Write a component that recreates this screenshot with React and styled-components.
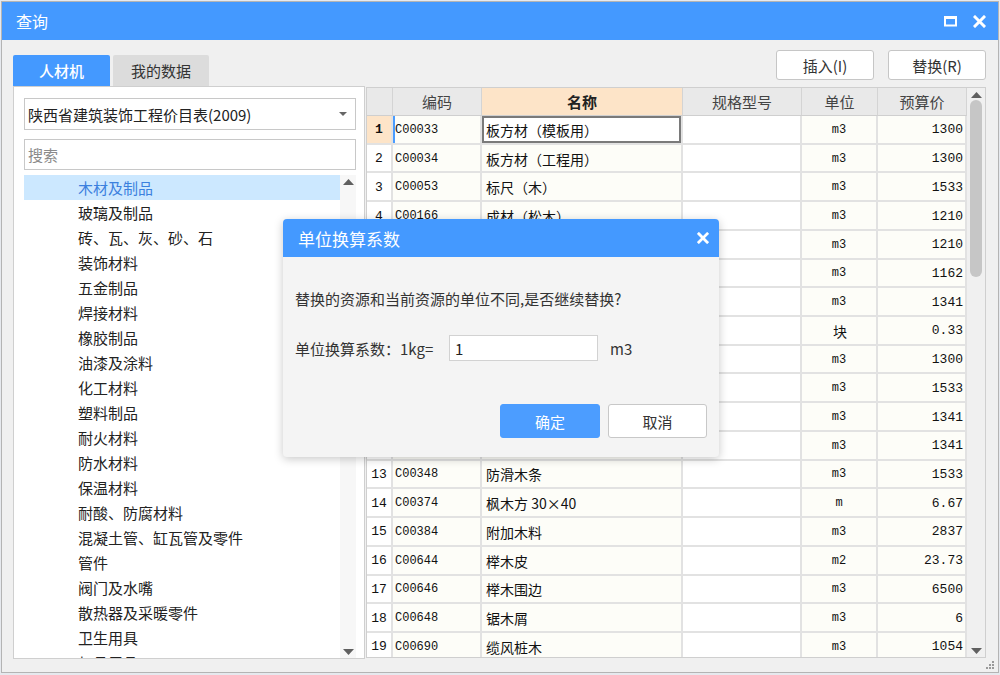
import React from "react";
import styled, { createGlobalStyle } from "styled-components";

const GlobalStyle = createGlobalStyle`
  html, body { margin: 0; padding: 0; background: #e6e9ee; }
  body { font-family: "Noto Sans CJK SC", "Noto Sans", sans-serif; }
  * { box-sizing: border-box; }
`;

const UI = `"Noto Sans CJK SC", "Noto Sans", sans-serif`;
const GRID = `"Liberation Mono", "Noto Sans CJK SC", monospace`;

const Window = styled.div`
  position: relative;
  margin: 1px 1px 0 1px;
  width: 998px;
  height: 672px;
  border: 1px solid #b4b4b4;
  background: #f0f0f0;
  display: flex;
  flex-direction: column;
  overflow: hidden;
`;

const TitleBar = styled.div`
  height: 38px;
  flex: none;
  background: #4499ff;
  display: flex;
  align-items: center;
  padding: 0 12px 0 14px;
`;

const Title = styled.div`
  flex: 1;
  color: #fff;
  font-family: ${UI};
  font-size: 16px;
  line-height: 20px;
`;

const TitleIcons = styled.div`
  display: flex;
  align-items: center;
  gap: 16px;
`;

const Toolbar = styled.div`
  height: 46px;
  flex: none;
  display: flex;
  justify-content: space-between;
  padding: 0 12px 0 11px;
`;

const Tabs = styled.div`
  display: flex;
  align-items: flex-end;
  gap: 3px;
`;

const Tab = styled.div`
  width: ${(p) => p.$w}px;
  height: 31px;
  border-radius: 2px 2px 0 0;
  background: ${(p) => (p.$active ? "#4499ff" : "#dcdcdc")};
  color: ${(p) => (p.$active ? "#fff" : "#333")};
  font-family: ${UI};
  font-size: 15px;
  font-weight: ${(p) => (p.$active ? 500 : 400)};
  display: flex;
  align-items: center;
  justify-content: center;
`;

const Buttons = styled.div`
  display: flex;
  gap: 14px;
  padding-top: 10px;
`;

const ToolButton = styled.div`
  width: 98px;
  height: 30px;
  border: 1px solid #c6c6c6;
  border-radius: 3px;
  background: #fff;
  color: #333;
  font-family: ${UI};
  font-size: 15px;
  display: flex;
  align-items: center;
  justify-content: center;
`;

const Main = styled.div`
  height: 573px;
  flex: none;
  display: flex;
  padding: 0 12px 0 11px;
`;

const LeftPanel = styled.div`
  width: 352px;
  height: 573px;
  background: #fff;
  border: 1px solid #cfcfcf;
  padding: 11px 8px 0 10px;
  display: flex;
  flex-direction: column;
`;

const Select = styled.div`
  height: 32px;
  border: 1px solid #c8c8c8;
  display: flex;
  align-items: center;
  padding: 0 8px 0 3px;
  font-family: ${UI};
  font-size: 15px;
  color: #222;
  flex: none;
`;

const SelectText = styled.span`
  flex: 1;
`;

const Search = styled.div`
  margin-top: 9px;
  height: 31px;
  border: 1px solid #c8c8c8;
  display: flex;
  align-items: center;
  padding: 0 3px;
  font-family: ${UI};
  font-size: 15px;
  color: #8a8a8a;
  flex: none;
`;

const TreeWrap = styled.div`
  margin-top: 5px;
  flex: 1;
  display: flex;
  overflow: hidden;
`;

const TreeList = styled.div`
  flex: 1;
  overflow: hidden;
`;

const TreeItem = styled.div`
  height: 25px;
  padding-left: 54px;
  display: flex;
  align-items: center;
  font-family: ${UI};
  font-size: 15px;
  color: ${(p) => (p.$sel ? "#3b80de" : "#222")};
  background: ${(p) => (p.$sel ? "#cce8ff" : "transparent")};
  white-space: nowrap;
`;

const VScroll = styled.div`
  width: ${(p) => p.$w}px;
  flex: none;
  background: ${(p) => p.$bg};
  display: flex;
  flex-direction: column;
  align-items: center;
  justify-content: space-between;
  padding: 4px 0 3px;
`;

const Thumb = styled.div`
  width: 12px;
  height: 177px;
  border-radius: 6px;
  background: #c6c6c6;
  margin-top: 2px;
`;

const ScrollBody = styled.div`
  flex: 1;
  display: flex;
  flex-direction: column;
  align-items: center;
  width: 100%;
`;

const TablePanel = styled.div`
  margin: 1px 0 1px 1px;
  width: 620px;
  height: 571px;
  border: 1px solid #cfcfcf;
  background: #f0f0f0;
  display: flex;
  overflow: hidden;
`;

const Grid = styled.div`
  width: 600px;
  flex: none;
  display: grid;
  grid-template-columns: 26px 89px 201px 119px 76px 89px;
  grid-auto-rows: 28.72px;
  grid-template-rows: 28px;
  align-content: start;
  background: #fff;
  overflow: hidden;
`;

const HeadCell = styled.div`
  background: ${(p) => (p.$hl ? "#fde4c8" : "#e9e9e9")};
  border-right: 1px solid #d4d4d4;
  border-bottom: 1px solid #cfcfcf;
  font-family: ${UI};
  font-size: 15px;
  font-weight: ${(p) => (p.$hl ? 700 : 400)};
  color: ${(p) => (p.$hl ? "#222" : "#444")};
  display: flex;
  align-items: center;
  justify-content: center;
`;

const Cell = styled.div`
  background: ${(p) => p.$bg || "#fdfdf8"};
  border-right: 2px solid #e2e2e2;
  border-bottom: 2px solid #e2e2e2;
  font-family: ${GRID};
  font-size: ${(p) => p.$fs || 12}px;
  font-weight: ${(p) => (p.$bold ? 700 : 400)};
  color: #111;
  display: flex;
  align-items: center;
  justify-content: ${(p) => p.$align || "flex-start"};
  padding: 1px ${(p) => (p.$align === "flex-end" ? 2 : 0)}px 0 ${(p) => (p.$align === "flex-start" || !p.$align ? 2 : 0)}px;
  white-space: nowrap;
  overflow: hidden;
  ${(p) => p.$focus && "box-shadow: inset 0 0 0 2px #7a7a7a;"}
  ${(p) => p.$blue && "box-shadow: inset 2px 0 0 #4a9cff;"}
`;

const NameText = styled.span`
  font-family: "Noto Sans CJK SC", sans-serif;
  font-size: 14px;
  padding-left: 2px;
`;

const Footer = styled.div`
  flex: 1;
  display: flex;
  justify-content: flex-end;
  align-items: flex-end;
  padding: 0 3px 2px 0;
`;

const Overlay = styled.div`
  position: absolute;
  left: 281px;
  top: 217px;
  width: 436px;
  height: 238px;
  background: #f4f4f4;
  border-radius: 4px;
  box-shadow: 0 2px 10px rgba(0, 0, 0, 0.22);
  overflow: hidden;
  display: flex;
  flex-direction: column;
`;

const DialogHead = styled.div`
  height: 38px;
  background: #4499ff;
  display: flex;
  align-items: center;
  padding: 0 10px 0 15px;
  color: #fff;
  font-family: ${UI};
  font-size: 17px;
  flex: none;
`;

const DialogTitle = styled.span`
  flex: 1;
`;

const DialogBody = styled.div`
  padding: 30px 12px 0 12px;
  font-family: ${UI};
  font-size: 15px;
  color: #333;
`;

const Message = styled.div`
  line-height: 24px;
  height: 24px;
`;

const FieldRow = styled.div`
  margin-top: 24px;
  display: flex;
  align-items: center;
  height: 26px;
`;

const FieldLabel = styled.span`
  width: 154px;
  flex: none;
`;

const FieldInput = styled.div`
  width: 149px;
  height: 26px;
  background: #fff;
  border: 1px solid #d2d2d2;
  display: flex;
  align-items: center;
  padding-left: 5px;
  color: #222;
`;

const Unit = styled.span`
  margin-left: 12px;
`;

const DialogButtons = styled.div`
  margin-top: 43px;
  display: flex;
  justify-content: flex-end;
  gap: 8px;
`;

const DialogButton = styled.div`
  width: ${(p) => p.$w}px;
  height: 34px;
  border-radius: 3px;
  background: ${(p) => (p.$primary ? "#4c9dff" : "#fff")};
  color: ${(p) => (p.$primary ? "#fff" : "#333")};
  border: 1px solid ${(p) => (p.$primary ? "#4c9dff" : "#c8c8c8")};
  display: flex;
  align-items: center;
  justify-content: center;
  font-size: 15px;
`;

const CloseIcon = ({ size = 13, stroke = 3 }) => (
  <svg width={size} height={size} viewBox="0 0 13 13">
    <path d="M2 2 L11 11 M11 2 L2 11" stroke="#fff" strokeWidth={stroke} strokeLinecap="square" />
  </svg>
);

const MaxIcon = () => (
  <svg width="13" height="11" viewBox="0 0 13 11">
    <rect x="1" y="1.5" width="11" height="8" fill="none" stroke="#fff" strokeWidth="2" />
    <rect x="0" y="0" width="13" height="3" fill="#fff" />
  </svg>
);

const Tri = ({ up, color = "#606060" }) => (
  <svg width="11" height="6" viewBox="0 0 11 6">
    <path d={up ? "M0 6 L5.5 0 L11 6 Z" : "M0 0 L5.5 6 L11 0 Z"} fill={color} />
  </svg>
);

const Grip = () => (
  <svg width="10" height="10" viewBox="0 0 10 10">
    {[[8, 2], [5, 5], [8, 5], [2, 8], [5, 8], [8, 8]].map(([x, y], i) => (
      <rect key={i} x={x - 1} y={y - 1} width="2" height="2" fill="#9a9a9a" />
    ))}
  </svg>
);

const treeItems = [
  "木材及制品", "玻璃及制品", "砖、瓦、灰、砂、石", "装饰材料", "五金制品", "焊接材料",
  "橡胶制品", "油漆及涂料", "化工材料", "塑料制品", "耐火材料", "防水材料", "保温材料",
  "耐酸、防腐材料", "混凝土管、缸瓦管及零件", "管件", "阀门及水嘴", "散热器及采暖零件",
  "卫生用具", "灯具用品",
];

// Rows 5-12 lie under the dialog; only their unit and price columns show.
const rows = [
  ["C00033", "板方材（模板用）", "m3", "1300"],
  ["C00034", "板方材（工程用）", "m3", "1300"],
  ["C00053", "标尺（木）", "m3", "1533"],
  ["C00166", "成材（松木）", "m3", "1210"],
  ["", "", "m3", "1210"],
  ["", "", "m3", "1162"],
  ["", "", "m3", "1341"],
  ["", "", "块", "0.33"],
  ["", "", "m3", "1300"],
  ["", "", "m3", "1533"],
  ["", "", "m3", "1341"],
  ["", "", "m3", "1341"],
  ["C00348", "防滑木条", "m3", "1533"],
  ["C00374", "枫木方 30×40", "m", "6.67"],
  ["C00384", "附加木料", "m3", "2837"],
  ["C00644", "榉木皮", "m2", "23.73"],
  ["C00646", "榉木围边", "m3", "6500"],
  ["C00648", "锯木屑", "m3", "6"],
  ["C00690", "缆风桩木", "m3", "1054"],
];

export default function App() {
  return (
    <>
      <GlobalStyle />
      <Window>
        <TitleBar>
          <Title>查询</Title>
          <TitleIcons>
            <MaxIcon />
            <CloseIcon />
          </TitleIcons>
        </TitleBar>
        <Toolbar>
          <Tabs>
            <Tab $active $w={97}>人材机</Tab>
            <Tab $w={96}>我的数据</Tab>
          </Tabs>
          <Buttons>
            <ToolButton>插入(I)</ToolButton>
            <ToolButton>替换(R)</ToolButton>
          </Buttons>
        </Toolbar>
        <Main>
          <LeftPanel>
            <Select>
              <SelectText>陕西省建筑装饰工程价目表(2009)</SelectText>
              <svg width="8" height="4" viewBox="0 0 8 4">
                <path d="M0 0 L4 4 L8 0 Z" fill="#666" />
              </svg>
            </Select>
            <Search>搜索</Search>
            <TreeWrap>
              <TreeList>
                {treeItems.map((t, i) => (
                  <TreeItem key={t} $sel={i === 0}>{t}</TreeItem>
                ))}
              </TreeList>
              <VScroll $w={16} $bg="#f7f7f7">
                <Tri up />
                <Tri />
              </VScroll>
            </TreeWrap>
          </LeftPanel>
          <TablePanel>
            <Grid>
              <HeadCell />
              <HeadCell>编码</HeadCell>
              <HeadCell $hl>名称</HeadCell>
              <HeadCell>规格型号</HeadCell>
              <HeadCell>单位</HeadCell>
              <HeadCell>预算价</HeadCell>
              {rows.map((r, i) => {
                const hidden = r[0] === "";
                return (
                  <React.Fragment key={i}>
                    <Cell
                      $align="center"
                      $bg={i === 0 ? "#fde4c8" : "#fff"}
                      $bold={i === 0}
                      $fs={13}
                    >
                      {hidden ? "" : i + 1}
                    </Cell>
                    <Cell $blue={i === 0}>{r[0]}</Cell>
                    <Cell $focus={i === 0} $bg={i === 0 ? "#fff" : undefined}>
                      {r[1] && <NameText>{r[1]}</NameText>}
                    </Cell>
                    <Cell $bg="#fff" />
                    <Cell $align="center" $fs={r[2] === "块" ? 14 : 12}>
                      {r[2] === "块" ? <NameText>块</NameText> : r[2]}
                    </Cell>
                    <Cell $align="flex-end" $fs={13}>{r[3]}</Cell>
                  </React.Fragment>
                );
              })}
            </Grid>
            <VScroll $w={18} $bg="#f0f0f0">
              <ScrollBody>
                <Tri up />
                <Thumb />
              </ScrollBody>
              <Tri />
            </VScroll>
          </TablePanel>
        </Main>
        <Footer>
          <Grip />
        </Footer>
        <Overlay>
          <DialogHead>
            <DialogTitle>单位换算系数</DialogTitle>
            <CloseIcon size={12} stroke={3} />
          </DialogHead>
          <DialogBody>
            <Message>替换的资源和当前资源的单位不同,是否继续替换?</Message>
            <FieldRow>
              <FieldLabel>单位换算系数：1kg=</FieldLabel>
              <FieldInput>1</FieldInput>
              <Unit>m3</Unit>
            </FieldRow>
            <DialogButtons>
              <DialogButton $primary $w={100}>确定</DialogButton>
              <DialogButton $w={99}>取消</DialogButton>
            </DialogButtons>
          </DialogBody>
        </Overlay>
      </Window>
    </>
  );
}
